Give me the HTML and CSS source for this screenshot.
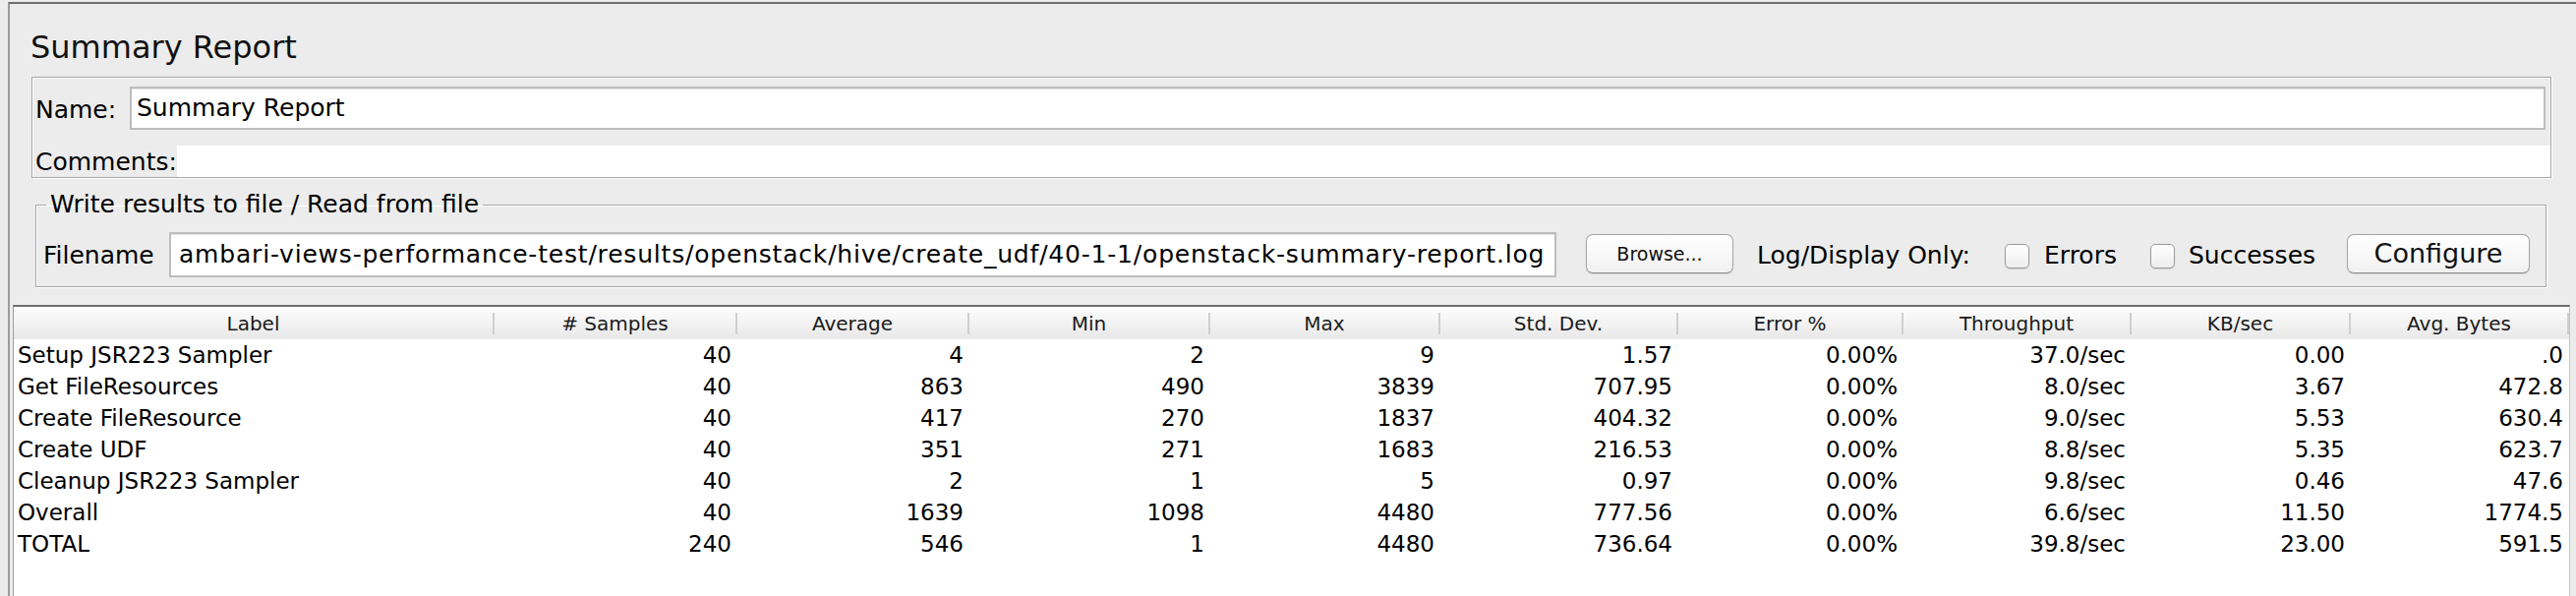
FILE: index.html
```html
<!DOCTYPE html>
<html>
<head>
<meta charset="utf-8">
<title>Summary Report</title>
<link rel="stylesheet" href="styles.css">
</head>
<body>
<div class="window">
  <h1 class="title">Summary Report</h1>

  <div class="name-panel etched">
    <div class="name-row">
      <span class="lbl name-lbl">Name:</span>
      <div class="textfield name-field">Summary Report</div>
    </div>
    <div class="comments-row">
      <span class="lbl comments-lbl">Comments:</span>
      <div class="comments-area"></div>
    </div>
  </div>

  <fieldset class="file-panel etched">
    <legend>Write results to file / Read from file</legend>
    <div class="file-row">
      <span class="lbl file-lbl">Filename</span>
      <div class="textfield file-field">ambari-views-performance-test/results/openstack/hive/create_udf/40-1-1/openstack-summary-report.log</div>
      <button class="btn browse">Browse...</button>
      <span class="lbl log-lbl">Log/Display Only:</span>
      <span class="checkbox"></span>
      <span class="lbl errors-lbl">Errors</span>
      <span class="checkbox"></span>
      <span class="lbl succ-lbl">Successes</span>
      <button class="btn configure">Configure</button>
    </div>
  </fieldset>

  <div class="table-pane">
    <div class="grid">
      <div class="th"><span>Label</span></div>
      <div class="th"><span># Samples</span></div>
      <div class="th"><span>Average</span></div>
      <div class="th"><span>Min</span></div>
      <div class="th"><span>Max</span></div>
      <div class="th"><span>Std. Dev.</span></div>
      <div class="th"><span>Error %</span></div>
      <div class="th"><span>Throughput</span></div>
      <div class="th"><span>KB/sec</span></div>
      <div class="th"><span>Avg. Bytes</span></div>

      <div class="td l">Setup JSR223 Sampler</div><div class="td">40</div><div class="td">4</div><div class="td">2</div><div class="td">9</div><div class="td">1.57</div><div class="td">0.00%</div><div class="td">37.0/sec</div><div class="td">0.00</div><div class="td">.0</div>

      <div class="td l">Get FileResources</div><div class="td">40</div><div class="td">863</div><div class="td">490</div><div class="td">3839</div><div class="td">707.95</div><div class="td">0.00%</div><div class="td">8.0/sec</div><div class="td">3.67</div><div class="td">472.8</div>

      <div class="td l">Create FileResource</div><div class="td">40</div><div class="td">417</div><div class="td">270</div><div class="td">1837</div><div class="td">404.32</div><div class="td">0.00%</div><div class="td">9.0/sec</div><div class="td">5.53</div><div class="td">630.4</div>

      <div class="td l">Create UDF</div><div class="td">40</div><div class="td">351</div><div class="td">271</div><div class="td">1683</div><div class="td">216.53</div><div class="td">0.00%</div><div class="td">8.8/sec</div><div class="td">5.35</div><div class="td">623.7</div>

      <div class="td l">Cleanup JSR223 Sampler</div><div class="td">40</div><div class="td">2</div><div class="td">1</div><div class="td">5</div><div class="td">0.97</div><div class="td">0.00%</div><div class="td">9.8/sec</div><div class="td">0.46</div><div class="td">47.6</div>

      <div class="td l">Overall</div><div class="td">40</div><div class="td">1639</div><div class="td">1098</div><div class="td">4480</div><div class="td">777.56</div><div class="td">0.00%</div><div class="td">6.6/sec</div><div class="td">11.50</div><div class="td">1774.5</div>

      <div class="td l">TOTAL</div><div class="td">240</div><div class="td">546</div><div class="td">1</div><div class="td">4480</div><div class="td">736.64</div><div class="td">0.00%</div><div class="td">39.8/sec</div><div class="td">23.00</div><div class="td">591.5</div>
    </div>
  </div>
</div>
</body>
</html>
```

FILE: styles.css
```css
html, body {
  margin: 0;
  padding: 0;
  background: #ececec;
  overflow: hidden;
}

body {
  font-family: "DejaVu Sans", "Liberation Sans", sans-serif;
  color: #000;
}

.window {
  margin: 2px 0 0 8px;
  height: 604px;
  box-sizing: border-box;
  border-top: 2px solid #6e6e6e;
  border-left: 2px solid #9c9c9c;
  display: flex;
  flex-direction: column;
}

.title {
  flex: 0 0 auto;
  margin: 24px 0 0 21px;
  font-size: 32px;
  line-height: 40px;
  height: 40px;
  font-weight: normal;
  color: #111;
}

.etched {
  border: 1px solid #a7a7a7;
  box-shadow: 1px 1px 0 #ffffff, inset 1px 1px 0 #ffffff;
}

.lbl {
  font-size: 25px;
  white-space: nowrap;
  box-sizing: border-box;
  flex: 0 0 auto;
}

/* Name / Comments panel */
.name-panel {
  flex: 0 0 auto;
  margin: 10px 25px 0 22px;
  padding: 9px 0 0 0;
}

.name-row {
  display: flex;
  align-items: center;
  height: 44px;
}

.name-lbl {
  width: 99px;
  padding-left: 3px;
  padding-top: 3px;
}

.textfield {
  box-sizing: border-box;
  background: #fff;
  border: 2px solid #bdbdbd;
  box-shadow: inset 0 1px 0 #e2e2e2;
  font-size: 25px;
  white-space: nowrap;
  overflow: hidden;
}

.name-field {
  flex: 1 1 auto;
  height: 44px;
  line-height: 40px;
  margin-right: 5px;
  padding-left: 5px;
}

.comments-row {
  display: flex;
  align-items: center;
  height: 32px;
  margin-top: 16px;
}

.comments-lbl {
  width: 147px;
  padding-left: 3px;
}

.comments-area {
  flex: 1 1 auto;
  height: 32px;
  background: #fff;
}

/* File panel */
.file-panel {
  flex: 0 0 auto;
  margin: 12px 30px 0 26px;
  padding: 13px 0 9px 0;
  min-width: 0;
}

.file-panel legend {
  font-size: 25px;
  line-height: 30px;
  padding: 0 4px;
  margin-left: 10px;
}

.file-row {
  display: flex;
  align-items: center;
  height: 46px;
}

.file-lbl {
  width: 135px;
  padding-left: 7px;
}

.file-field {
  flex: 0 0 1411px;
  width: 1411px;
  height: 46px;
  line-height: 42px;
  padding-left: 8px;
  letter-spacing: 0.8px;
}

.btn {
  flex: 0 0 auto;
  box-sizing: border-box;
  height: 40px;
  margin: 0 0 3px 0;
  padding: 0;
  font-family: "DejaVu Sans", "Liberation Sans", sans-serif;
  color: #111;
  background: linear-gradient(#ffffff, #f1f1f1);
  border: 1px solid #a4a4a4;
  border-bottom-color: #8c8c8c;
  border-radius: 7px;
  box-shadow: 0 1px 1px rgba(0, 0, 0, 0.12);
}

.browse {
  width: 150px;
  margin-left: 30px;
  font-size: 19px;
}

.configure {
  width: 186px;
  font-size: 27px;
}

.log-lbl {
  width: 252px;
  margin-left: 24px;
}

.checkbox {
  flex: 0 0 auto;
  box-sizing: border-box;
  width: 25px;
  height: 25px;
  margin-top: 3px;
  background: linear-gradient(#ffffff, #ededed);
  border: 1px solid #9a9a9a;
  border-radius: 5px;
  box-shadow: 0 1px 1px rgba(0, 0, 0, 0.12);
}

.errors-lbl {
  width: 123px;
  padding-left: 15px;
}

.succ-lbl {
  width: 175px;
  padding-left: 14px;
}

/* Table */
.table-pane {
  flex: 1 1 auto;
  margin: 18px 6px 0 3px;
  background: #fff;
  border-top: 2px solid #6f6f6f;
  border-left: 1px solid #9d9d9d;
  border-right: 1px solid #c4c4c4;
  overflow: hidden;
}

.grid {
  display: grid;
  grid-template-columns: 489px 247px 236px 245px 234px 242px 229px 232px 223px 222px;
  grid-template-rows: 33px;
  grid-auto-rows: 32px;
}

.th {
  box-sizing: border-box;
  height: 33px;
  padding: 6px 0 5px 0;
  background: linear-gradient(#fdfdfd, #e8e8e8);
}

.th span {
  display: block;
  height: 22px;
  line-height: 22px;
  font-size: 20px;
  text-align: center;
  color: #1a1a1a;
  border-right: 2px solid #cfcfcf;
  white-space: nowrap;
}

.td {
  box-sizing: border-box;
  height: 32px;
  line-height: 32px;
  font-size: 23px;
  padding: 0 6px 0 4px;
  text-align: right;
  white-space: nowrap;
  overflow: hidden;
}

.td.l {
  text-align: left;
}
```
